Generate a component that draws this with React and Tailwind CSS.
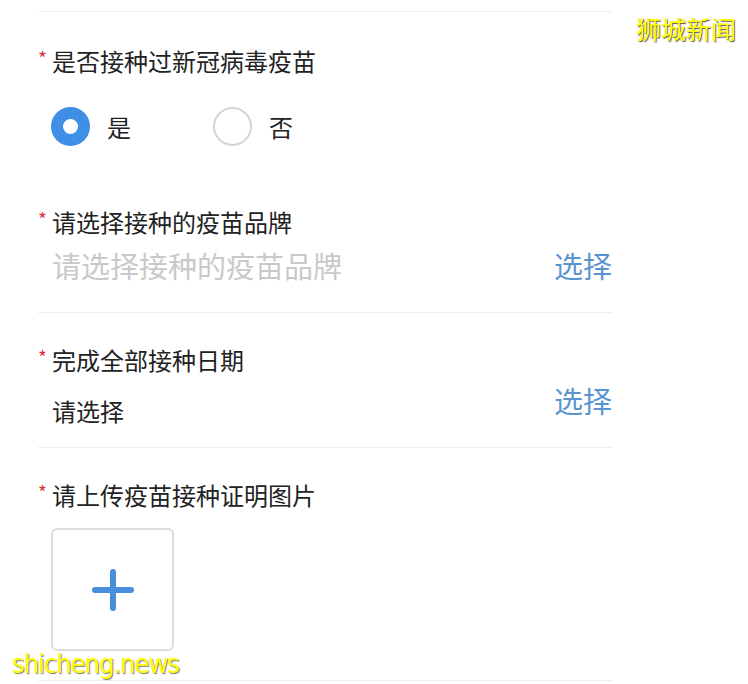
import { useState } from 'react';

const font = { fontFamily: '"Noto Sans CJK SC", "Noto Sans", sans-serif' };

function Label({ children }) {
  return (
    <div className="flex h-[32px] items-center">
      <span className="mb-[8px] w-[14px] text-[19px] leading-none text-[#d9363e]">*</span>
      <span className="text-[24px] leading-[32px] text-[#222]">{children}</span>
    </div>
  );
}

function Radio({ checked, label, onClick }) {
  return (
    <button type="button" onClick={onClick} className="flex items-center gap-[17px]">
      <span
        className={
          checked
            ? 'block h-[39px] w-[39px] rounded-full border-[12px] border-[#3f8fe6] bg-white'
            : 'block h-[39px] w-[39px] rounded-full border-2 border-[#d4d4d4] bg-white'
        }
      />
      <span className="text-[24px] leading-[32px] text-[#222]">{label}</span>
    </button>
  );
}

export default function App() {
  const [vaccinated, setVaccinated] = useState(true);

  return (
    <div className="relative h-[684px] w-[748px] overflow-hidden bg-white" style={font}>
      <div className="ml-[38px] w-[574px] pt-[11px]">
        <div className="h-px bg-[#eeeeee]" />

        <div className="mt-[33px]">
          <Label>是否接种过新冠病毒疫苗</Label>
        </div>
        <div className="ml-[13px] mt-[30px] flex gap-[82px]">
          <Radio checked={vaccinated} label="是" onClick={() => setVaccinated(true)} />
          <Radio checked={!vaccinated} label="否" onClick={() => setVaccinated(false)} />
        </div>

        <div className="mt-[60px]">
          <Label>请选择接种的疫苗品牌</Label>
        </div>
        <div className="ml-[14px] mt-[9px] flex items-center justify-between">
          <span className="text-[29px] leading-[36px] text-[#c9c9c9]">请选择接种的疫苗品牌</span>
          <button type="button" className="text-[29px] leading-[36px] text-[#5a94cf]">选择</button>
        </div>
        <div className="mt-[29px] h-px bg-[#eeeeee]" />

        <div className="mt-[31px]">
          <Label>完成全部接种日期</Label>
        </div>
        <div className="ml-[14px] mt-[6px] flex items-start justify-between">
          <span className="mt-[13px] text-[24px] leading-[32px] text-[#222]">请选择</span>
          <button type="button" className="text-[29px] leading-[36px] text-[#5a94cf]">选择</button>
        </div>
        <div className="mt-[20px] h-px bg-[#eeeeee]" />

        <div className="mt-[31px]">
          <Label>请上传疫苗接种证明图片</Label>
        </div>
        <button
          type="button"
          className="ml-[13px] mt-[17px] flex h-[123px] w-[123px] items-center justify-center rounded-[6px] border-2 border-[#dcdcdc] bg-white"
        >
          <svg width="44" height="44" viewBox="0 0 44 44" fill="none">
            <path d="M22 4v36M4 22h36" stroke="#4a8ddc" strokeWidth="6" strokeLinecap="round" />
          </svg>
        </button>
        <div className="mt-[29px] h-px bg-[#eeeeee]" />
      </div>

      <div
        className="absolute right-[12px] top-[12px] text-[25px] leading-[32px] text-[#ffff00]"
        style={{ textShadow: '1px 1px 1px #555' }}
      >
        狮城新闻
      </div>
      <div
        className="absolute left-[12px] top-[647px] text-[27px] leading-[34px] tracking-[-1px] text-[#ffff00]"
        style={{ fontFamily: '"Liberation Sans Narrow", "DejaVu Sans Condensed", sans-serif', textShadow: '1px 1px 1px #777' }}
      >
        shicheng.news
      </div>
    </div>
  );
}
